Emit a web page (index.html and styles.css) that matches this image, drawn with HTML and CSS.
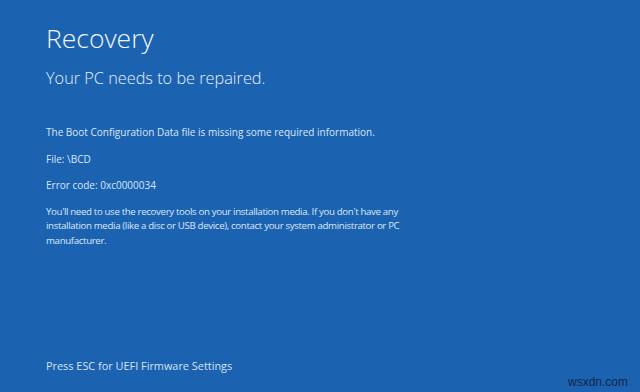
FILE: index.html
```html
<!DOCTYPE html>
<html>
<head>
<meta charset="utf-8">
<link rel="stylesheet" href="styles.css">
</head>
<body>
<main class="screen">
  <section class="content">
    <h1 class="title">Recovery</h1>
    <h2 class="subtitle">Your PC needs to be repaired.</h2>
    <p class="line first">The Boot Configuration Data file is missing some required information.</p>
    <p class="line">File: \BCD</p>
    <p class="line">Error code: 0xc0000034</p>
    <p class="line para">You'll need to use the recovery tools on your installation media. If you don't have any<br>installation media (like a disc or USB device), contact your system administrator or PC<br>manufacturer.</p>
  </section>
  <footer class="footer">
    <span class="esc">Press ESC for UEFI Firmware Settings</span>
    <span class="mark">wsxdn.com</span>
  </footer>
</main>
</body>
</html>
```
FILE: styles.css
```css
html, body {
  margin: 0;
  padding: 0;
  width: 640px;
  height: 392px;
  overflow: hidden;
  background: #1b63b1;
}
.screen {
  width: 640px;
  height: 392px;
  box-sizing: border-box;
  padding: 0 0 0 46px;
  display: flex;
  flex-direction: column;
  font-family: "Open Sans", "Noto Sans", sans-serif;
  color: #dbe6f5;
}
.content {
  flex: 1;
  padding-top: 22px;
}
.title {
  margin: 0;
  font-weight: 300;
  font-size: 26.5px;
  line-height: 32px;
  color: #f2f6fc;
}
.subtitle {
  margin: 13px 0 0 0;
  font-weight: 300;
  font-size: 16.3px;
  line-height: 22px;
  color: #e6eef9;
}
.line {
  margin: 0 0 12.5px 0;
  font-size: 10px;
  line-height: 14px;
}
.first {
  margin-top: 36px;
}
.para {
  white-space: nowrap;
  font-size: 9.7px;
  letter-spacing: -0.35px;
  line-height: 14.6px;
  margin-top: 1px;
}
.footer {
  display: flex;
  justify-content: space-between;
  align-items: flex-end;
  padding: 0 12px 0 0;
}
.esc {
  font-size: 10.9px;
  line-height: 14px;
  margin-bottom: 19px;
  color: #d6e2f3;
}
.mark {
  font-family: "Liberation Sans", Arial, sans-serif;
  font-size: 12px;
  line-height: 14px;
  color: #13254a;
  margin-bottom: 3px;
}
```
